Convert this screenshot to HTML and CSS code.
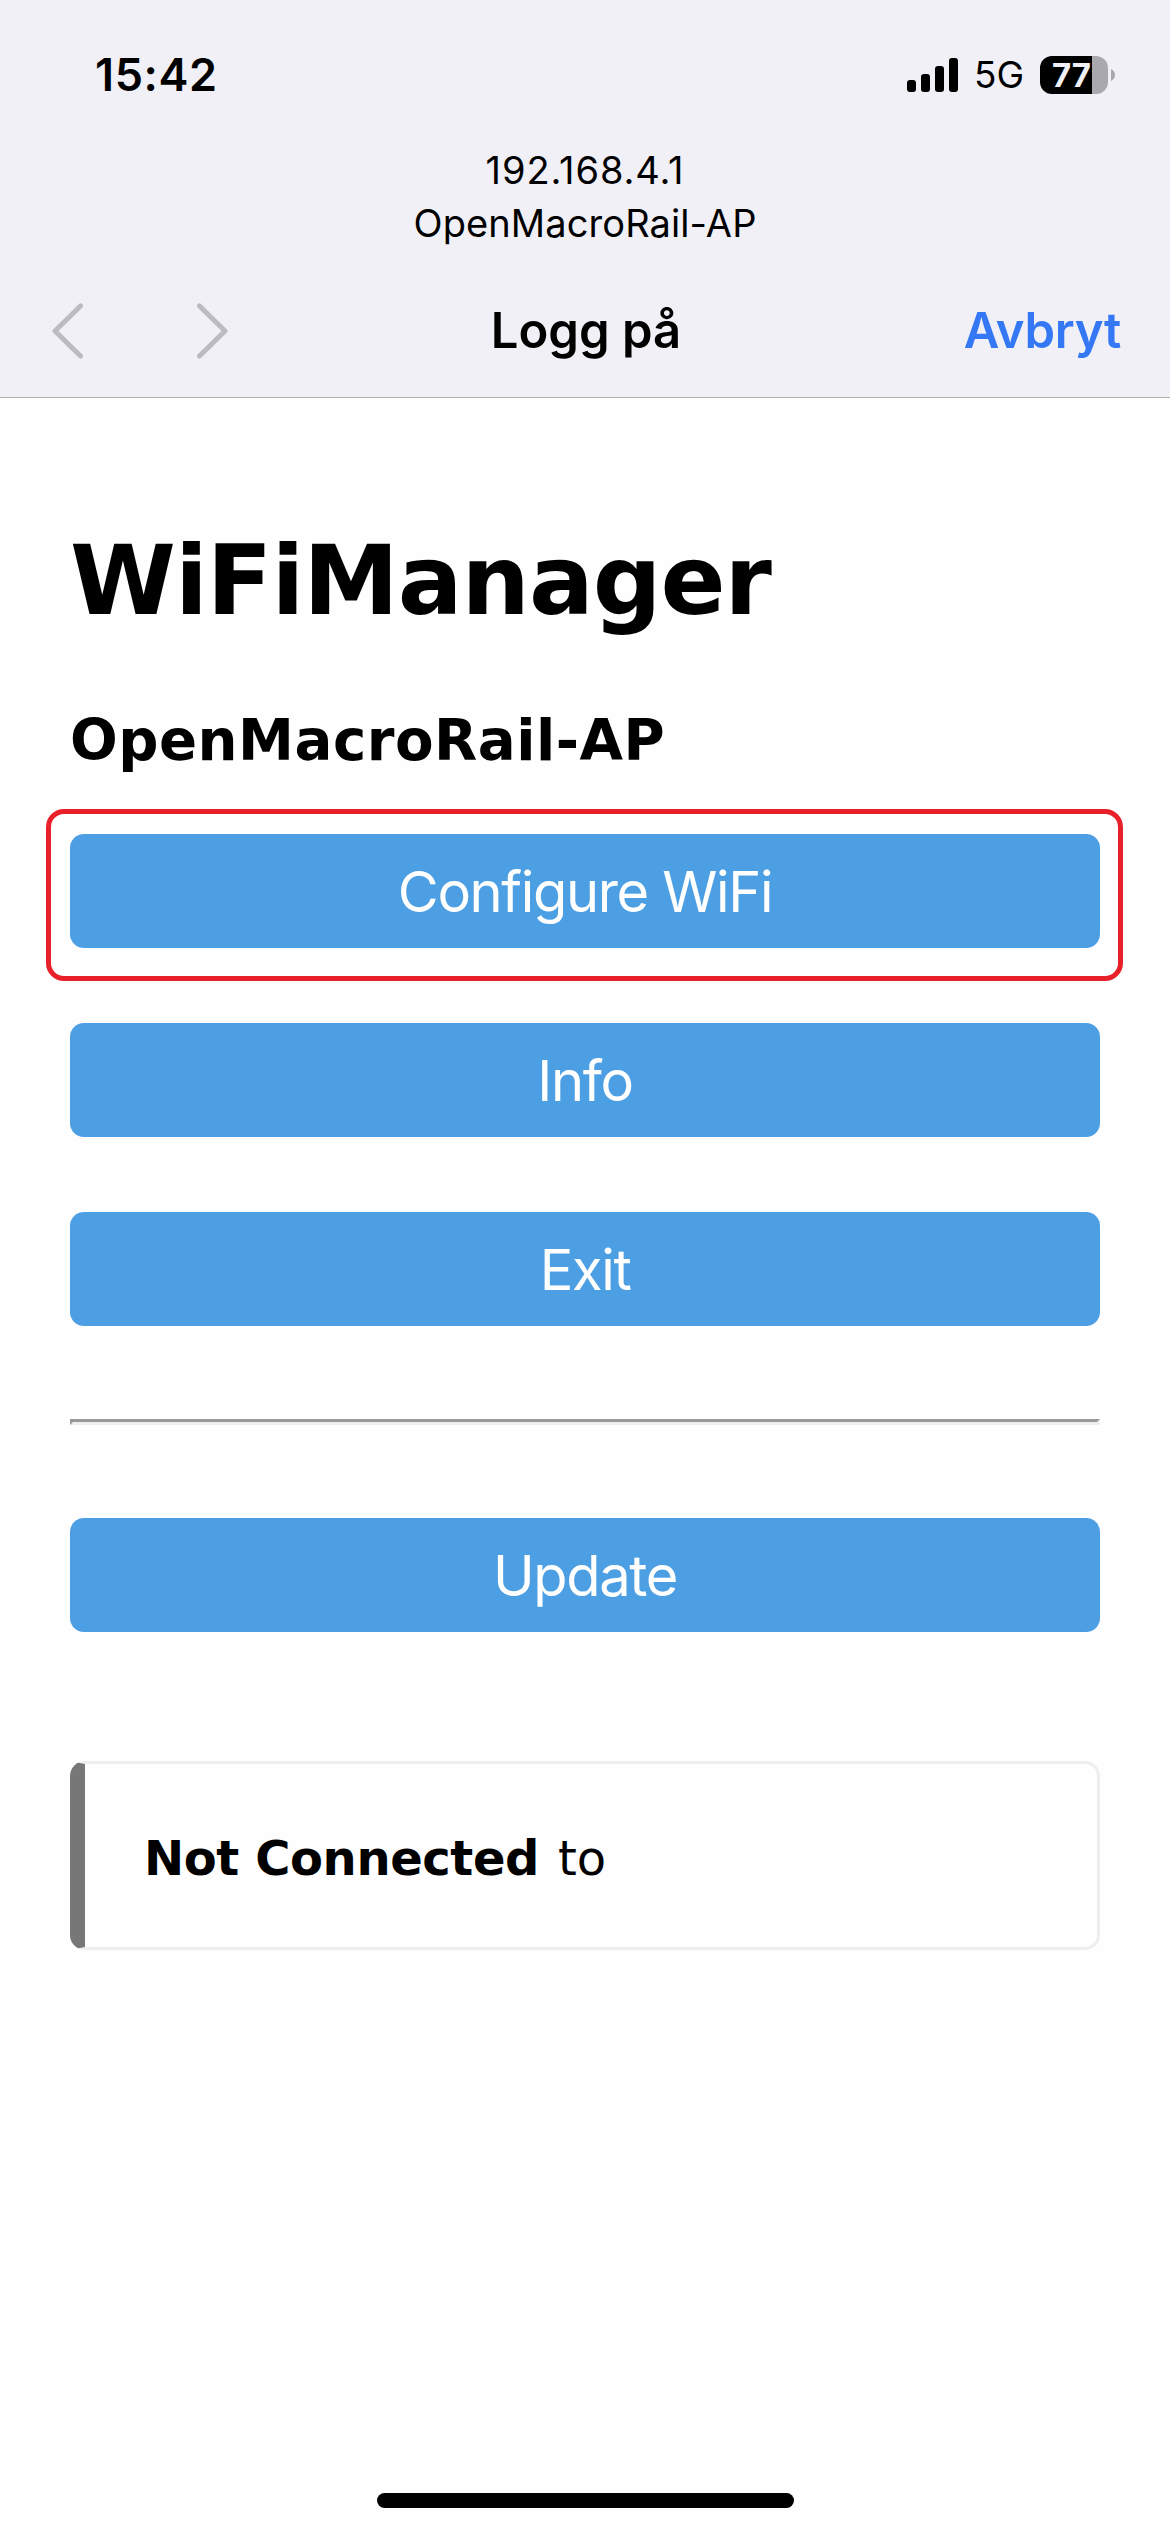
FILE: index.html
```html
<!DOCTYPE html>
<html lang="nb">
<head>
<meta charset="utf-8">
<title>Logg på</title>
<link rel="stylesheet" href="styles.css">
</head>
<body>
<header class="chrome">
  <div class="status">
    <time class="clock">15:42</time>
    <div class="indicators">
      <svg class="signal" width="51" height="34" viewBox="0 0 51 34">
        <rect x="0" y="22" width="9" height="12" rx="3"/>
        <rect x="14" y="16" width="9" height="18" rx="3"/>
        <rect x="28" y="8" width="9" height="26" rx="3"/>
        <rect x="42" y="0" width="9" height="34" rx="3"/>
      </svg>
      <span class="network">5G</span>
      <div class="battery"><span class="level">77</span></div>
      <svg class="nub" width="4" height="12" viewBox="0 0 4 12"><path d="M0 0C2.500 1 4 3.400 4 6S2.500 11 0 12Z"/></svg>
    </div>
  </div>
  <div class="address">
    <div class="ip">192.168.4.1</div>
    <div class="ssid">OpenMacroRail-AP</div>
  </div>
  <nav class="nav">
    <div class="arrows">
      <svg width="32" height="56" viewBox="0 0 32 56"><path d="M29.500 3L4 28L29.500 53"/></svg>
      <svg width="32" height="56" viewBox="0 0 32 56"><path d="M2.500 3L28 28L2.500 53"/></svg>
    </div>
    <div class="title">Logg på</div>
    <a class="cancel">Avbryt</a>
  </nav>
</header>
<main class="portal">
  <h1>WiFiManager</h1>
  <h3>OpenMacroRail-AP</h3>
  <div class="menu">
    <button class="btn highlighted"><span>Configure WiFi</span></button>
    <button class="btn"><span>Info</span></button>
    <button class="btn"><span>Exit</span></button>
  </div>
  <hr>
  <button class="btn"><span>Update</span></button>
  <div class="msg"><strong>Not Connected</strong> to</div>
</main>
<div class="home"></div>
</body>
</html>
```
FILE: styles.css
```css
* { box-sizing: border-box; }
body {
  margin: 0;
  width: 1170px;
  height: 2532px;
  display: flex;
  flex-direction: column;
  background: #fefefe;
  color: #000;
  font-family: Inter, "Liberation Sans", sans-serif;
}
.chrome { height: 398px; background: #f1f0f6; border-bottom: 1px solid #b0afb4; }
.status {
  display: flex;
  justify-content: space-between;
  align-items: center;
  height: 144px;
  padding: 5px 55px 0 95px;
}
.clock { font-size: 45px; font-weight: 600; letter-spacing: 0.6px; }
.indicators { display: flex; align-items: center; height: 38px; }
.signal { margin-right: 16px; }
.network { width: 49px; margin-right: 17px; font-size: 37px; line-height: 38px; white-space: nowrap; }
.battery {
  width: 68px;
  height: 38px;
  border-radius: 12px;
  background: linear-gradient(to right, #000 52px, #a9a8ae 52px);
}
.level {
  display: block;
  padding-left: 12px;
  font-size: 33px;
  font-weight: 700;
  line-height: 38px;
  color: #f1f0f6;
}
.nub { margin-left: 3px; fill: #a9a8ae; }
.address { font-size: 38px; line-height: 53px; text-align: center; height: 106px; }
.ip { letter-spacing: 0.9px; }
.ssid { letter-spacing: 0.1px; }
.nav {
  display: grid;
  grid-template-columns: 1fr auto 1fr;
  align-items: center;
  height: 147px;
  padding: 15px 49px 0 51px;
}
.arrows { display: flex; gap: 114px; }
.arrows path { fill: none; stroke: #bcbbc0; stroke-width: 5; stroke-linecap: round; stroke-linejoin: round; }
.title, .cancel { font-size: 49px; font-weight: 600; line-height: 60px; }
.cancel { justify-self: end; letter-spacing: -0.3px; color: #3478f6; }

.portal { flex: 1; padding: 127px 70px 0; font-family: "DejaVu Sans", Verdana, sans-serif; }
h1 { margin: 0; font-size: 96px; line-height: 112px; letter-spacing: -1px; }
h3 { margin: 71px 0 60px; font-size: 56.2px; line-height: 66px; letter-spacing: 0.5px; }
.menu { display: grid; gap: 75px; }
.btn {
  position: relative;
  display: flex;
  justify-content: center;
  align-items: center;
  width: 100%;
  height: 114px;
  padding: 1px 0 0;
  border: 0;
  border-radius: 14px;
  background: #4d9fe4;
  color: #fff;
  font: 400 56px/68px Inter, sans-serif;
  letter-spacing: -1.35px;
}
.highlighted::after {
  content: "";
  position: absolute;
  inset: -25px -23px -33px -24px;
  border: 5px solid #e8202a;
  border-radius: 18px;
}
hr { width: 100%; height: 6px; margin: 93px 0; border: 3px solid; border-color: #999 #eee #eee #999; }
.msg {
  display: flex;
  align-items: center;
  gap: 19px;
  height: 189px;
  margin-top: 129px;
  padding: 4px 0 0 59px;
  border: 3px solid #eee;
  border-left: 15px solid #777;
  border-radius: 15px;
  font-size: 48px;
  line-height: 56px;
}
.msg strong { letter-spacing: -0.4px; }
.home { width: 417px; height: 15px; margin: 0 auto 24px; border-radius: 8px; background: #000; }
```
